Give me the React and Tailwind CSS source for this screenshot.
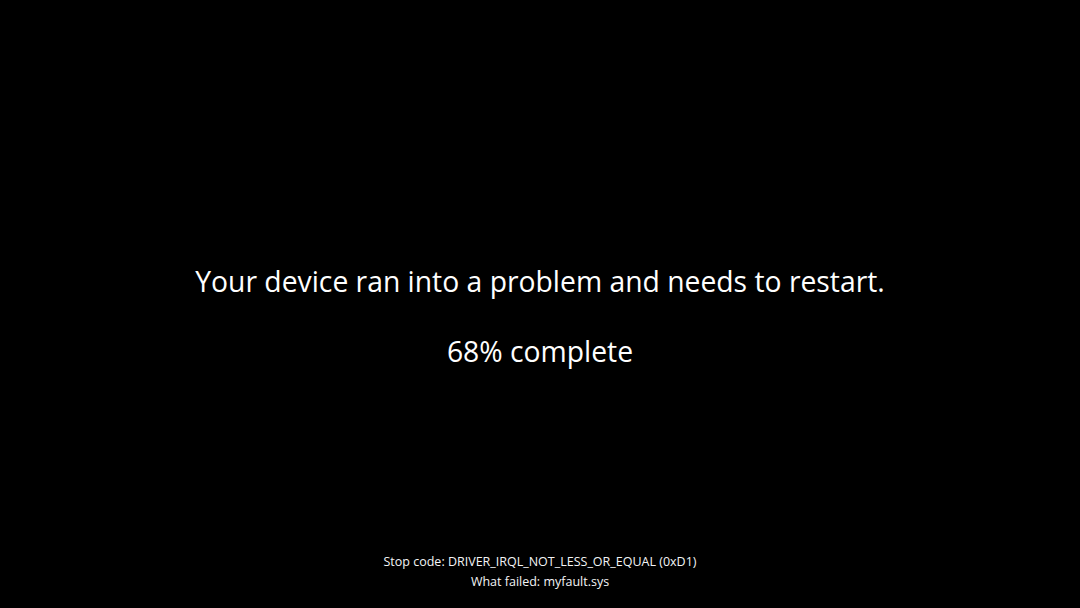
export default function App() {
  return (
    <div
      className="h-[608px] w-full bg-black text-white flex flex-col items-center"
      style={{ fontFamily: '"Open Sans", "Noto Sans", sans-serif' }}
    >
      <div className="pt-[261px] flex flex-col items-center">
        <h1 className="text-[28.3px] leading-[40px] font-normal">
          Your device ran into a problem and needs to restart.
        </h1>
        <p className="mt-[30px] text-[28.3px] leading-[40px]">68% complete</p>
      </div>
      <div className="mt-auto pb-[16px] flex flex-col items-center text-[12.5px] leading-[20px] text-gray-100">
        <p>Stop code: DRIVER_IRQL_NOT_LESS_OR_EQUAL (0xD1)</p>
        <p>What failed: myfault.sys</p>
      </div>
    </div>
  );
}
